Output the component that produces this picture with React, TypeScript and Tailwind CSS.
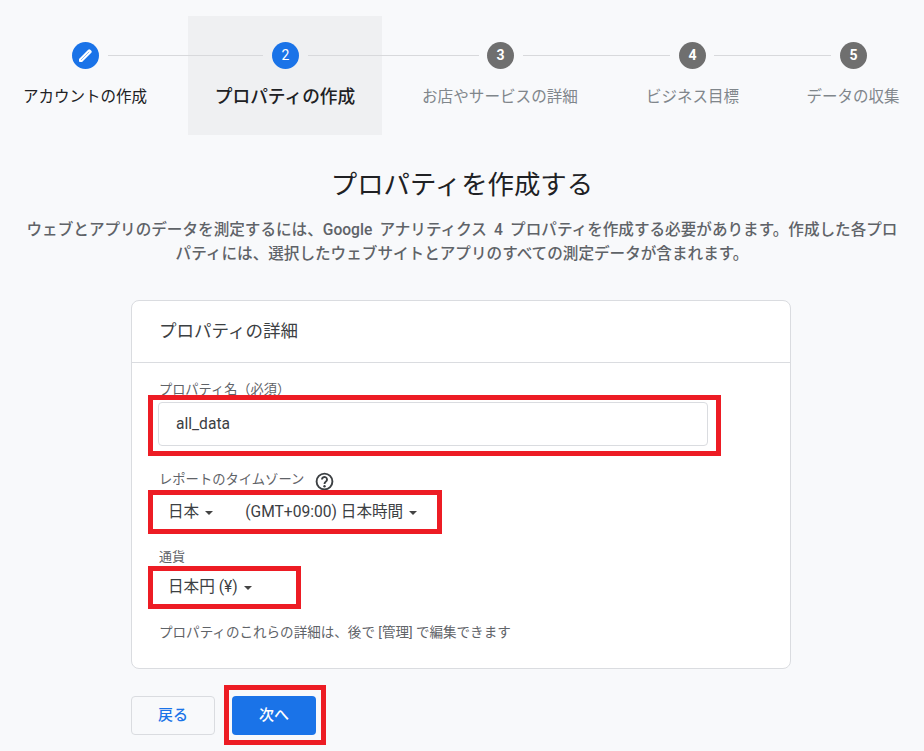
import React from "react";

function Line({ className = "" }: { className?: string }) {
  return <div className={"h-px bg-[#d8d9dc] " + className} />;
}

function Circle({ n, active, edit }: { n?: number; active?: boolean; edit?: boolean }) {
  return (
    <div
      className={
        "flex h-[27px] w-[27px] shrink-0 items-center justify-center rounded-full text-[14px] text-white " +
        (active ? "bg-[#1a73e8]" : "bg-[#6f6f6f] font-bold")
      }
    >
      {edit ? (
        <svg width="17" height="17" viewBox="0 0 17 17">
          <path d="M2 11.9 L11.2 2.7 a1.5 1.5 0 0 1 2.1 0 l1 1 a1.5 1.5 0 0 1 0 2.1 L5.1 15 H2.9 a0.9 0.9 0 0 1 -0.9 -0.9 z" fill="#fff" />
          <path d="M4 13 L12.2 4.8" stroke="#8ab4f0" strokeWidth="0.9" fill="none" />
        </svg>
      ) : (
        n
      )}
    </div>
  );
}

function Caret() {
  return <span className="ml-[6px] inline-block h-0 w-0 border-x-[4px] border-t-[4px] border-x-transparent border-t-[#444]" />;
}

function RedBox({ className }: { className: string }) {
  return <div className={"pointer-events-none absolute border-[5px] border-[#ed1c24] " + className} />;
}

export default function App() {
  return (
    <div className="h-[751px] w-[924px] overflow-hidden bg-[#f8f9fb] font-['Roboto','Noto_Sans_CJK_JP',sans-serif] text-[#202124]">
      {/* stepper */}
      <div className="flex h-[135px] pt-[16px]">
        <div className="w-[188px] pt-[26px]">
          <div className="flex items-center pl-[72px]">
            <Circle active edit />
            <Line className="ml-[9px] flex-1" />
          </div>
          <div className="mt-[15px] w-[170px] text-center text-[15.5px] leading-[26px]">アカウントの作成</div>
        </div>
        <div className="h-[119px] w-[194px] bg-[#eff0f2] pt-[26px]">
          <div className="flex items-center">
            <Line className="mr-[9px] w-[75px]" />
            <Circle n={2} active />
            <Line className="ml-[9px] flex-1" />
          </div>
          <div className="mt-[15px] text-center text-[17.7px] font-medium leading-[26px]">プロパティの作成</div>
        </div>
        <div className="w-[236px] pt-[26px]">
          <div className="flex items-center">
            <Line className="mr-[8px] w-[97px]" />
            <Circle n={3} />
            <Line className="ml-[9px] flex-1" />
          </div>
          <div className="mt-[15px] text-center text-[15.6px] leading-[26px] text-[#80868b]">お店やサービスの詳細</div>
        </div>
        <div className="w-[148px] pt-[26px]">
          <div className="flex items-center">
            <Line className="mr-[9px] w-[52px]" />
            <Circle n={4} />
            <Line className="ml-[8px] flex-1" />
          </div>
          <div className="mt-[15px] whitespace-nowrap pl-[1px] text-center text-[15.5px] leading-[26px] text-[#80868b]">ビジネス目標</div>
        </div>
        <div className="w-[158px] pt-[26px]">
          <div className="flex items-center">
            <Line className="mr-[9px] w-[65px]" />
            <Circle n={5} />
          </div>
          <div className="mt-[15px] w-[174px] whitespace-nowrap text-center text-[15.5px] leading-[26px] text-[#80868b]">データの収集</div>
        </div>
      </div>

      {/* heading */}
      <h1 className="mt-[31px] text-center text-[26.4px] font-normal leading-[38px]">プロパティを作成する</h1>
      <p className="mx-auto mt-[14px] w-[878px] text-center text-[15.6px] font-medium leading-[24px] text-[#5f6368] [word-spacing:3.3px]">
        ウェブとアプリのデータを測定するには、Google アナリティクス 4 プロパティを作成する必要があります。作成した各プロパティには、選択したウェブサイトとアプリのすべての測定データが含まれます。
      </p>

      {/* card */}
      <div className="ml-[131px] mt-[34px] h-[369px] w-[660px] rounded-[8px] border border-[#dadce0] bg-white">
        <div className="flex h-[62px] items-center border-b border-[#dadce0] pl-[27px] text-[17.5px] text-[#3c4043]">プロパティの詳細</div>
        <div className="pl-[26px]">
          <div className="relative mt-[18px] w-[550px]">
            <div className="pl-[1px] text-[13.2px] leading-[18px] text-[#5f6368]">プロパティ名（必須）</div>
            <div className="mt-[3px] flex h-[44px] items-center rounded-[4px] border border-[#dadce0] pl-[17px] pt-[2px] text-[15.6px] text-[#3c4043]">all_data</div>
            <RedBox className="-bottom-[10px] -left-[10px] -right-[13px] top-[14px]" />
          </div>

          <div className="ml-[1px] mt-[24px] flex h-[20px] items-center text-[13.3px] text-[#5f6368]">
            レポートのタイムゾーン
            <svg className="ml-[11px] mt-[3px]" width="19" height="19" viewBox="0 0 24 24" fill="none">
              <circle cx="12" cy="12" r="10" stroke="#3c4043" strokeWidth="2.4" />
              <path d="M8.8 9.5a3.2 3.2 0 1 1 5 2.6c-1.2.8-1.8 1.4-1.8 2.9" stroke="#3c4043" strokeWidth="2.4" fill="none" />
              <circle cx="12" cy="18" r="1.5" fill="#3c4043" />
            </svg>
          </div>
          <div className="relative mt-[7px] flex h-[28px] items-center pl-[10px] pt-[3px] text-[15.6px] text-[#3c4043]">
            <span>日本</span>
            <Caret />
            <span className="ml-[32px]">(GMT+09:00) 日本時間</span>
            <Caret />
            <RedBox className="-left-[10px] -top-[7px] h-[44px] w-[294px]" />
          </div>

          <div className="ml-[1px] mt-[22px] text-[13px] leading-[20px] text-[#5f6368]">通貨</div>
          <div className="relative mt-[6px] flex h-[28px] items-center pl-[10px] pt-[2px] text-[15.6px] text-[#3c4043]">
            <span>日本円 (¥)</span>
            <Caret />
            <RedBox className="-left-[10px] -top-[7px] h-[43px] w-[153px]" />
          </div>

          <div className="ml-[1px] mt-[21px] text-[13.55px] leading-[20px] text-[#5f6368]">プロパティのこれらの詳細は、後で [管理] で編集できます</div>
        </div>
      </div>

      {/* buttons */}
      <div className="ml-[131px] mt-[27px] flex gap-[17px]">
        <button className="h-[39px] w-[84px] rounded-[4px] border border-[#dadce0] text-[15px] font-medium text-[#1a73e8]">戻る</button>
        <div className="relative">
          <button className="h-[39px] w-[84px] rounded-[4px] bg-[#1a73e8] text-[15px] font-medium text-white">次へ</button>
          <RedBox className="-left-[8px] -top-[11px] h-[60px] w-[102px]" />
        </div>
      </div>
    </div>
  );
}
